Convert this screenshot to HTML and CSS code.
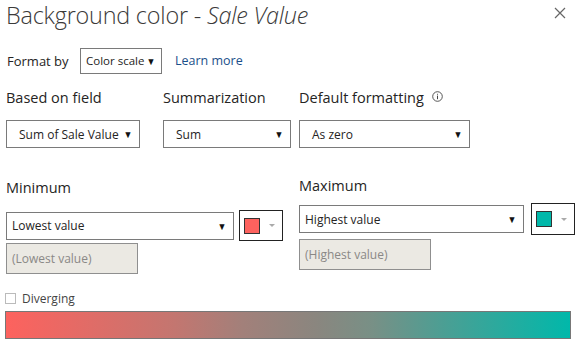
FILE: index.html
```html
<!DOCTYPE html>
<html>
<head>
<meta charset="utf-8">
<link rel="stylesheet" href="styles.css">
</head>
<body>
<div class="panel">
  <header class="title-row">
    <h1 class="title">Background color - <em>Sale Value</em></h1>
    <span class="close"><svg width="12" height="12" viewBox="0 0 12 12"><path d="M1 1L11 11M11 1L1 11" stroke="#666" stroke-width="1.2" fill="none"/></svg></span>
  </header>

  <div class="format-row">
    <span class="format-label">Format by</span>
    <div class="select select-format">Color scale <span class="arrow">▼</span></div>
    <a class="learn">Learn more</a>
  </div>

  <div class="fields-row">
    <div class="field field-based">
      <div class="label">Based on field</div>
      <div class="select select-field"><span>Sum of Sale Value</span><span class="arrow">▼</span></div>
    </div>
    <div class="field field-sum">
      <div class="label">Summarization</div>
      <div class="select select-field"><span>Sum</span><span class="arrow">▼</span></div>
    </div>
    <div class="field field-default">
      <div class="label">Default formatting <span class="info"><svg width="11" height="11" viewBox="0 0 11 11"><circle cx="5.5" cy="5.5" r="4.8" stroke="#444" stroke-width="0.9" fill="none"/><path d="M5.5 4.6V8.2M5.5 2.8V3.7" stroke="#444" stroke-width="1"/></svg></span></div>
      <div class="select select-field"><span>As zero</span><span class="arrow">▼</span></div>
    </div>
  </div>

  <div class="range-row">
    <div class="range range-min">
      <div class="label">Minimum</div>
      <div class="range-controls">
        <div class="select select-range"><span>Lowest value</span><span class="arrow">▼</span></div>
        <div class="picker"><span class="swatch swatch-red"></span><span class="picker-arrow"></span></div>
      </div>
      <div class="disabled-box">(Lowest value)</div>
    </div>
    <div class="range range-max">
      <div class="label">Maximum</div>
      <div class="range-controls">
        <div class="select select-range"><span>Highest value</span><span class="arrow">▼</span></div>
        <div class="picker"><span class="swatch swatch-teal"></span><span class="picker-arrow"></span></div>
      </div>
      <div class="disabled-box">(Highest value)</div>
    </div>
  </div>

  <div class="check-row">
    <span class="checkbox"></span>
    <span class="check-label">Diverging</span>
  </div>

  <div class="gradient"></div>
</div>
</body>
</html>
```

FILE: styles.css
```css
* { box-sizing: border-box; }
html, body { margin: 0; padding: 0; background: #fff; }
body {
  font-family: "Open Sans", "Noto Sans", sans-serif;
  color: #252423;
  width: 575px;
  height: 343px;
  overflow: hidden;
}
.panel { position: relative; }

.title-row {
  display: flex;
  justify-content: space-between;
  align-items: flex-start;
  height: 30px;
}
.title {
  margin: 0;
  padding-left: 6px;
  font-size: 23.4px;
  font-weight: 300;
  line-height: 30px;
  color: #3b3a39;
  letter-spacing: -0.2px;
}
.title em { font-style: italic; }
.close {
  margin: 7px 9px 0 0;
  width: 12px;
  height: 12px;
  display: block;
}
.close svg { display: block; }

.format-row {
  display: flex;
  align-items: center;
  margin-top: 18px;
  height: 25px;
}
.format-label {
  font-size: 13px;
  padding-left: 7px;
  width: 80px;
}
.select {
  border: 1px solid #7a7a7a;
  display: flex;
  align-items: center;
  justify-content: space-between;
  font-size: 12px;
  color: #252423;
  background: #fff;
}
.arrow { font-size: 10px; color: #111; transform: scaleX(0.9); }
.select-format {
  width: 82px;
  height: 26px;
  padding: 0 5px 0 5px;
  font-size: 11.5px;
}
.learn {
  margin-left: 13px;
  font-size: 12.5px;
  color: #1b4f8a;
}

.fields-row {
  display: flex;
  margin-top: 15px;
}
.label {
  font-size: 14.5px;
  line-height: 20px;
  color: #252423;
  display: flex;
  align-items: center;
}
.info { margin-left: 8px; display: inline-flex; margin-top: -4px; }
.field .select { margin-top: 12px; height: 28px; padding: 0 6px 0 12px; }
.field-based { margin-left: 6px; width: 134px; }
.field-sum { margin-left: 23px; width: 128px; }
.field-default { margin-left: 8px; width: 171px; }

.range-row {
  display: flex;
  margin-top: 25px;
}
.range-min { margin-left: 6px; width: 277px; padding-top: 5px; }
.range-max { margin-left: 16px; width: 276px; padding-top: 3px; }
.range-controls {
  display: flex;
  align-items: center;
  margin-top: 7px;
}
.range-min .range-controls { margin-top: 12px; }
.select-range {
  width: 228px;
  height: 28px;
  padding: 0 6px 0 5px;
}
.range-max .select-range { width: 225px; }
.picker {
  margin-left: 5px;
  width: 44px;
  height: 31px;
  border: 1px solid #222;
  display: flex;
  align-items: center;
  padding-left: 4px;
}
.range-max .picker { margin-left: 7px; height: 32px; }
.swatch {
  width: 16px;
  height: 16px;
  border: 1px solid #333;
}
.swatch-red { background: #fd625e; }
.swatch-teal { background: #01b8aa; }
.picker-arrow {
  margin-left: 9px;
  width: 0;
  height: 0;
  border-left: 3.5px solid transparent;
  border-right: 3.5px solid transparent;
  border-top: 3.5px solid #aaa;
}
.disabled-box {
  margin-top: 4px;
  width: 132px;
  height: 31px;
  border: 1px solid #8f8f8f;
  background: #ebe9e3;
  color: #8a8886;
  font-size: 12px;
  display: flex;
  align-items: center;
  padding-left: 5px;
}
.range-min .disabled-box { margin-top: 2px; }

.check-row {
  display: flex;
  align-items: center;
  margin-top: 17px;
  height: 14px;
}
.checkbox {
  margin-left: 5px;
  width: 11px;
  height: 11px;
  border: 1px solid #bbb;
}
.check-label {
  margin-left: 6px;
  font-size: 12px;
  color: #444;
}

.gradient {
  margin: 6px 0 0 5px;
  width: 566px;
  height: 28px;
  border: 1px solid #777;
  background: linear-gradient(to right, #fd625e 0%, #c37670 30%, #a2807a 42%, #8a867f 55%, #789086 65%, #4a9f94 78%, #01b8aa 100%);
}
```
